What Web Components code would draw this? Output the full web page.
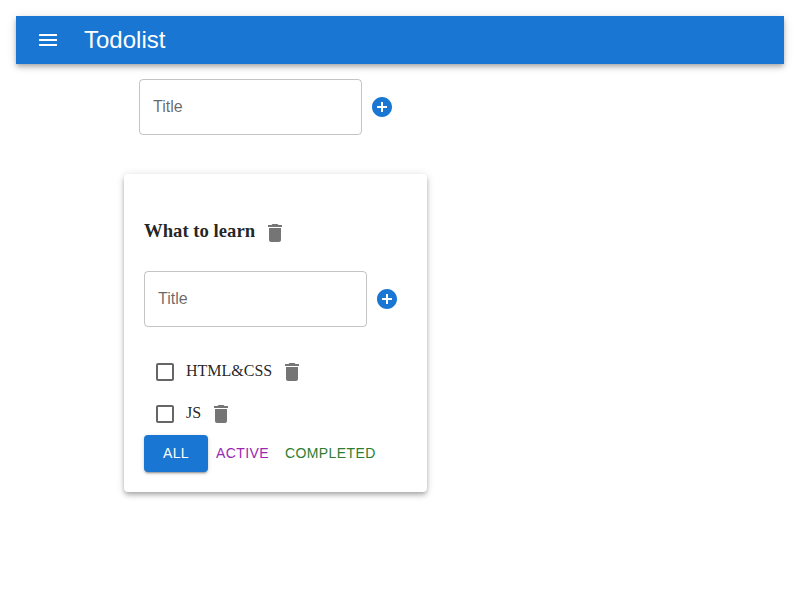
<!DOCTYPE html>
<html lang="en"><head><meta charset="utf-8"><title>Todolist</title>
<style>
body{margin:0;padding:16px;background:#fff;color:rgba(0,0,0,.87);font:16px/24px "Liberation Serif",serif}
</style></head><body>
<todo-app></todo-app>
<script>
const define=(name,html)=>{
  const t=document.createElement('template');t.innerHTML=html;
  customElements.define(name,class extends HTMLElement{
    constructor(){super();this.attachShadow({mode:'open'}).append(t.content.cloneNode(true));}
  });
};
define('menu-icon',`<style>:host{display:block;width:24px;height:24px}svg{display:block;fill:currentColor}</style>
<svg width="24" height="24" viewBox="0 0 24 24"><path d="M3 18h18v-2H3v2zm0-5h18v-2H3v2zm0-7v2h18V6H3z"/></svg>`);
define('delete-icon',`<style>:host{display:block;padding:8px;width:24px;height:24px;color:rgba(0,0,0,.54)}svg{display:block;fill:currentColor}</style>
<svg width="24" height="24" viewBox="0 0 24 24"><path d="M6 19c0 1.100.9 2 2 2h8c1.100 0 2-.9 2-2V7H6v12zM19 4h-3.500l-1-1h-5l-1 1H5v2h14V4z"/></svg>`);
define('add-icon',`<style>:host{display:block;padding:8px;width:24px;height:24px;color:#1976d2}svg{display:block;fill:currentColor}</style>
<svg width="24" height="24" viewBox="0 0 24 24"><path d="M12 2C6.480 2 2 6.480 2 12s4.480 10 10 10 10-4.480 10-10S17.520 2 12 2zm5 11h-4v4h-2v-4H7v-2h4V7h2v4h4v2z"/></svg>`);
define('check-box',`<style>:host{display:block;padding:9px;width:24px;height:24px;color:rgba(0,0,0,.6)}svg{display:block;fill:currentColor}</style>
<svg width="24" height="24" viewBox="0 0 24 24"><path d="M19 5v14H5V5h14m0-2H5c-1.100 0-2 .9-2 2v14c0 1.100.9 2 2 2h14c1.100 0 2-.9 2-2V5c0-1.100-.9-2-2-2z"/></svg>`);
define('app-bar',`<style>:host{display:flex;align-items:center;height:48px;padding:0 20px;box-sizing:border-box;gap:24px;background:#1976d2;color:#fff;font:24px/32px "Liberation Sans",Arial,sans-serif;box-shadow:0 2px 4px -1px rgba(0,0,0,.2),0 4px 5px rgba(0,0,0,.14),0 1px 10px rgba(0,0,0,.12)}</style>
<menu-icon></menu-icon><slot></slot>`);
define('add-form',`<style>:host{display:flex;align-items:center}.field{box-sizing:border-box;width:223px;height:56px;padding:15px 13px;border:1px solid rgba(0,0,0,.23);border-radius:4px;color:rgba(0,0,0,.6);font:16px/23px "Liberation Sans",Arial,sans-serif}</style>
<div class="field"><slot></slot></div><add-icon></add-icon>`);
define('task-row',`<style>:host{display:flex;align-items:center;height:42px}span{margin-top:-2px}</style>
<check-box></check-box><span><slot></slot></span><delete-icon></delete-icon>`);
define('filter-button',`<style>:host{display:block;box-sizing:border-box;height:37px;padding:6px 8px;border-radius:4px;text-transform:uppercase;text-align:center;font:14px/25px "Liberation Sans",Arial,sans-serif;letter-spacing:.4px}
:host([kind=all]){width:64px;background:#1976d2;color:#fff;box-shadow:0 3px 1px -2px rgba(0,0,0,.2),0 2px 2px rgba(0,0,0,.14),0 1px 5px rgba(0,0,0,.12)}
:host([kind=active]){color:#9c27b0}:host([kind=completed]){color:#2e7d32}</style><slot></slot>`);
define('todo-card',`<style>:host{display:block;box-sizing:border-box;width:303px;height:318px;padding:39px 20px 20px;border-radius:4px;background:#fff;box-shadow:0 2px 4px -1px rgba(0,0,0,.2),0 4px 5px rgba(0,0,0,.14),0 1px 10px rgba(0,0,0,.12)}
.head{display:flex;align-items:center;height:40px;font-size:18.72px;font-weight:700}.head span{margin-top:-4px}
add-form{margin:18px 0 24px}.filters{display:flex}</style>
<div class="head"><span>What to learn</span><delete-icon></delete-icon></div>
<add-form>Title</add-form>
<task-row>HTML&amp;CSS</task-row><task-row>JS</task-row>
<div class="filters"><filter-button kind="all">All</filter-button><filter-button kind="active">Active</filter-button><filter-button kind="completed">Completed</filter-button></div>`);
define('todo-app',`<style>:host{display:block}main{padding:15px 0 0 108px}.new{margin:0 0 39px 15px}</style>
<app-bar>Todolist</app-bar><main><add-form class="new">Title</add-form><todo-card></todo-card></main>`);
</script></body></html>
